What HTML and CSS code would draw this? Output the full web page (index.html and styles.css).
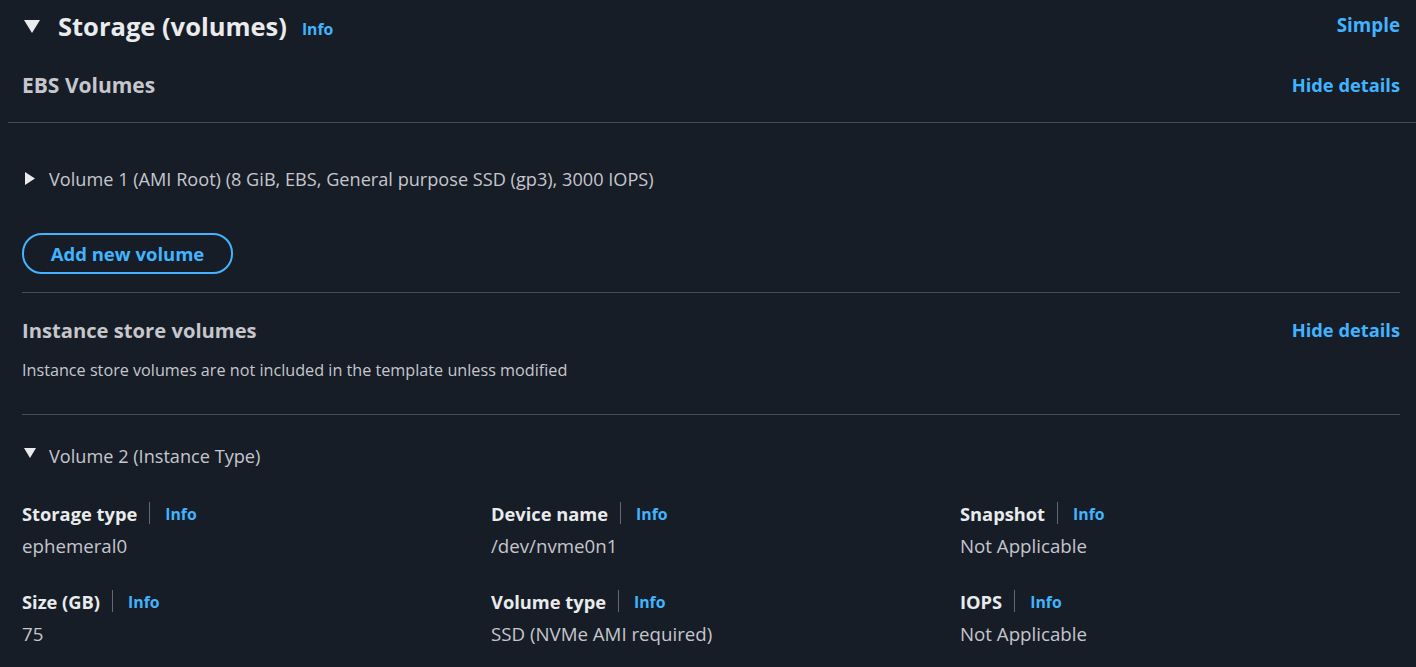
FILE: index.html
```html
<!DOCTYPE html>
<html>
<head>
<meta charset="utf-8">
<link rel="stylesheet" href="styles.css">
</head>
<body>
<div class="panel">
  <div class="header">
    <div class="header-left">
      <svg class="caret-lg" width="16" height="13" viewBox="0 0 16 13"><polygon points="0,0 16,0 8,13" fill="#e9ebed"/></svg>
      <h2 class="title">Storage (volumes)</h2>
      <a class="info info-title">Info</a>
    </div>
    <a class="link-bold simple">Simple</a>
  </div>

  <div class="row-head ebs">
    <span class="subhead sub-ebs">EBS Volumes</span>
    <a class="link-bold">Hide details</a>
  </div>
  <div class="divider divider-wide"></div>

  <div class="content">
    <div class="expander vol1">
      <svg class="caret-sm" width="10" height="13" viewBox="0 0 10 13"><polygon points="0,0 10,6.5 0,13" fill="#e9ebed"/></svg>
      <span>Volume 1 (AMI Root) (8 GiB, EBS, General purpose SSD (gp3), 3000 IOPS)</span>
    </div>
    <button class="btn">Add new volume</button>
    <div class="divider d2"></div>

    <div class="row-head instance">
      <span class="subhead">Instance store volumes</span>
      <a class="link-bold">Hide details</a>
    </div>
    <p class="desc">Instance store volumes are not included in the template unless modified</p>
    <div class="divider d3"></div>

    <div class="expander vol2">
      <svg class="caret-sm" width="12" height="10" viewBox="0 0 12 10"><polygon points="0,0 12,0 6,10" fill="#e9ebed"/></svg>
      <span>Volume 2 (Instance Type)</span>
    </div>

    <div class="grid">
      <div class="field">
        <div class="label"><span>Storage type</span><i class="sep"></i><a class="info">Info</a></div>
        <div class="value">ephemeral0</div>
      </div>
      <div class="field">
        <div class="label"><span>Device name</span><i class="sep"></i><a class="info">Info</a></div>
        <div class="value">/dev/nvme0n1</div>
      </div>
      <div class="field">
        <div class="label"><span>Snapshot</span><i class="sep"></i><a class="info">Info</a></div>
        <div class="value">Not Applicable</div>
      </div>
      <div class="field">
        <div class="label"><span>Size (GB)</span><i class="sep"></i><a class="info">Info</a></div>
        <div class="value">75</div>
      </div>
      <div class="field">
        <div class="label"><span>Volume type</span><i class="sep"></i><a class="info">Info</a></div>
        <div class="value">SSD (NVMe AMI required)</div>
      </div>
      <div class="field">
        <div class="label"><span>IOPS</span><i class="sep"></i><a class="info">Info</a></div>
        <div class="value">Not Applicable</div>
      </div>
    </div>
  </div>
</div>
</body>
</html>
```

FILE: styles.css
```css
* { box-sizing: border-box; }
html, body {
  margin: 0;
  padding: 0;
  background: #161d26;
  font-family: "Open Sans", "Noto Sans", sans-serif;
  color: #c6c6cd;
}
.panel {
  width: 1416px;
  height: 667px;
  overflow: hidden;
}
a { cursor: pointer; }
.header {
  height: 52px;
  display: flex;
  align-items: center;
  justify-content: space-between;
  padding: 0 16px 0 24px;
}
.header-left {
  display: flex;
  align-items: center;
}
.caret-lg { display: block; margin-right: 18px; }
.title {
  margin: 0;
  font-size: 25.5px;
  line-height: 32px;
  font-weight: 700;
  color: #e9ebed;
}
.info {
  color: #42b4ff;
  font-size: 15.8px;
  font-weight: 700;
  line-height: 20px;
}
.info-title { margin-left: 15px; margin-top: 6px; }
.link-bold {
  color: #42b4ff;
  font-size: 18.3px;
  font-weight: 700;
  line-height: 28px;
}
.simple { margin-top: -2px; font-size: 18.8px; }
.row-head {
  display: flex;
  justify-content: space-between;
  align-items: center;
  height: 28px;
}
.ebs {
  margin-top: 19px;
  padding: 0 16px 0 22px;
}
.subhead {
  font-size: 20.2px;
  font-weight: 700;
  color: #c6c6cd;
  line-height: 28px;
}
.sub-ebs { font-size: 21px; }
.divider {
  height: 1px;
  background: #414d5c;
}
.divider-wide { margin: 23px 0 0 8px; }
.content { padding: 0 16px 0 22px; }
.expander {
  display: flex;
  align-items: center;
  height: 24px;
  font-size: 18.15px;
  line-height: 24px;
  color: #c6c6cd;
}
.vol1 { margin-top: 44px; }
.vol1 .caret-sm { margin: -2px 0 0 3px; }
.vol1 span { margin-left: 14px; }
.vol2 { margin-top: 29px; }
.vol2 .caret-sm { margin: -6px 0 0 2px; }
.vol2 span { margin-left: 13px; }
.btn {
  display: block;
  margin-top: 42px;
  height: 41px;
  width: 211px;
  border: 2px solid #42b4ff;
  border-radius: 20px;
  background: transparent;
  color: #42b4ff;
  font-family: "Open Sans", "Noto Sans", sans-serif;
  font-size: 18.5px;
  font-weight: 700;
  padding: 0;
}
.d2 { margin-top: 18px; }
.instance { margin-top: 23px; }
.desc {
  margin: 16px 0 0;
  font-size: 16.2px;
  line-height: 20px;
  color: #c6c6cd;
}
.d3 { margin-top: 34px; }
.grid {
  margin-top: 31px;
  display: grid;
  grid-template-columns: repeat(3, 440px);
  column-gap: 29px;
  row-gap: 29px;
}
.label {
  display: flex;
  align-items: center;
  height: 28px;
  font-size: 18.3px;
  font-weight: 700;
  color: #e9ebed;
}
.sep {
  display: block;
  width: 1px;
  height: 22px;
  background: #5f6b7a;
  margin: 0 15px 0 12px;
}
.label .info { margin-top: 2px; }
.value {
  margin-top: 7px;
  font-size: 18.7px;
  line-height: 24px;
  color: #c6c6cd;
}
```
